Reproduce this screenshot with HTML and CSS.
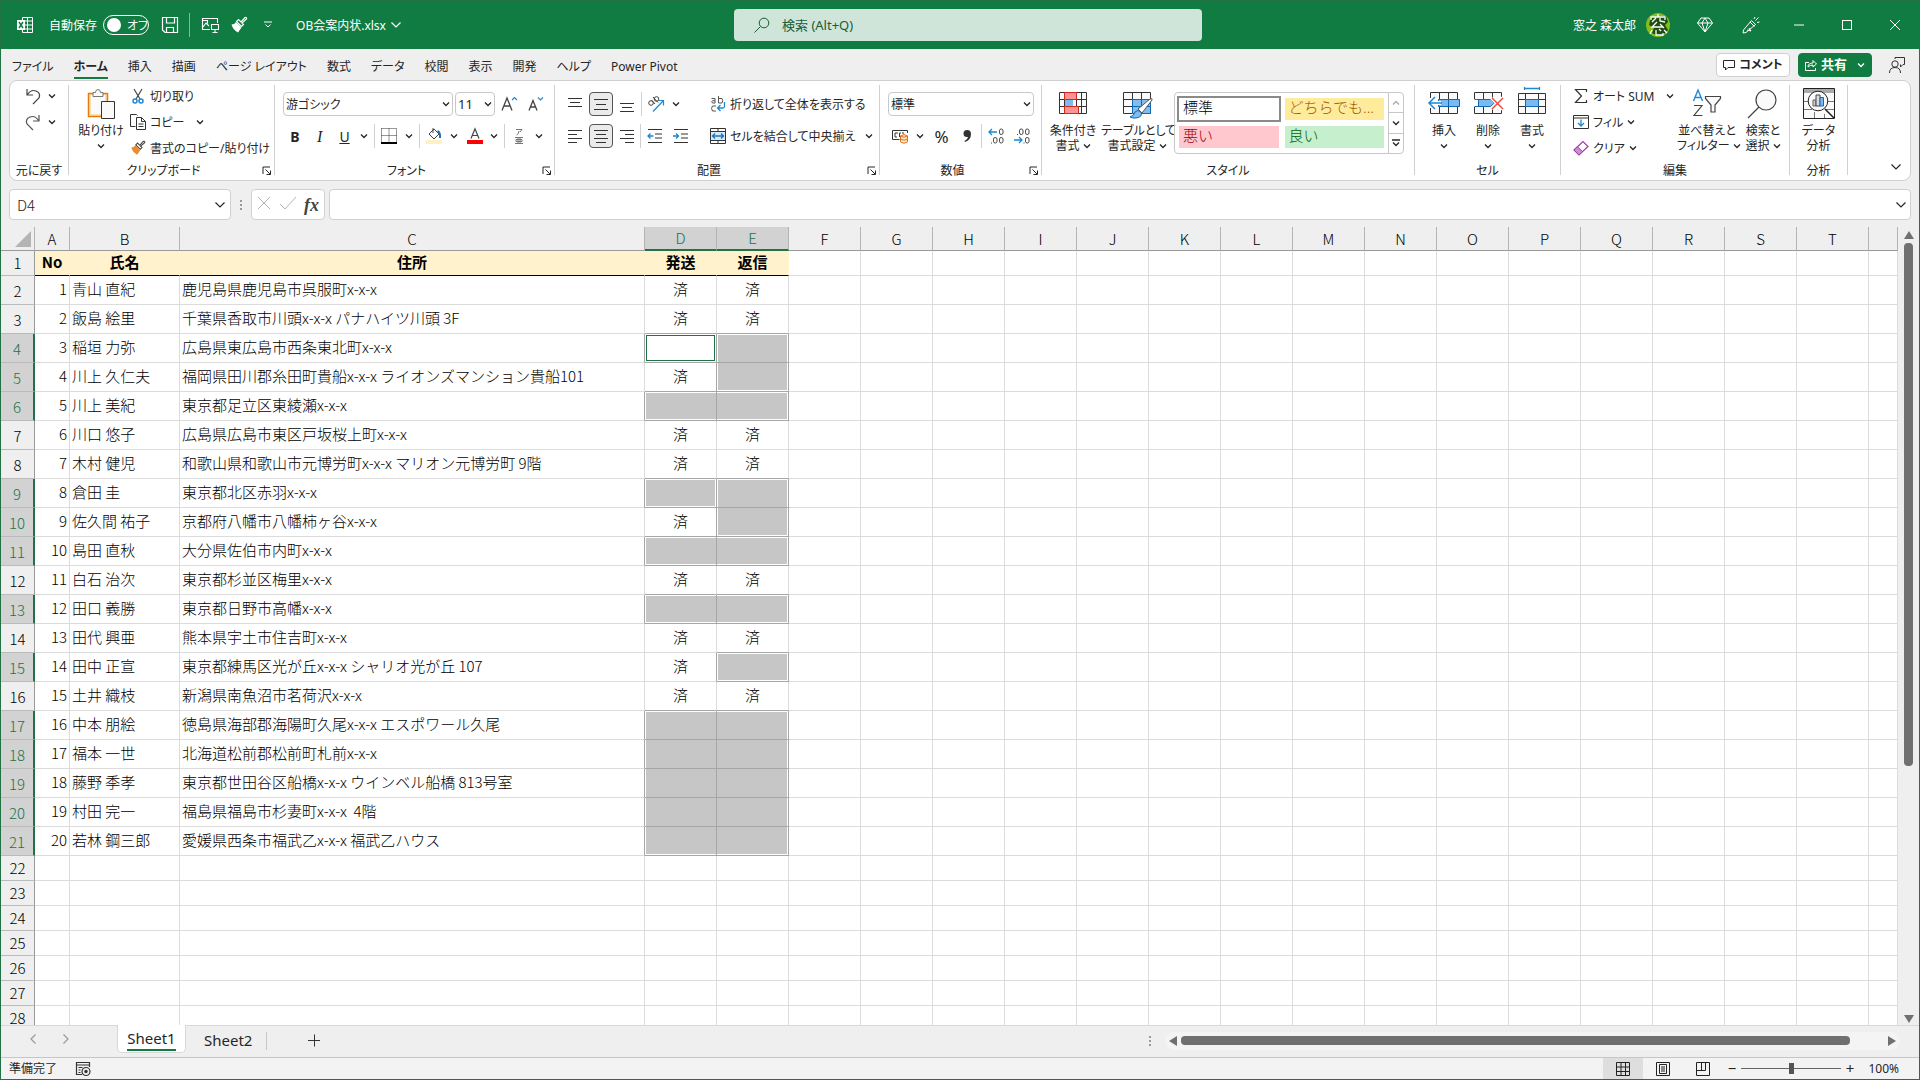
FILE: index.html
```
<!DOCTYPE html>
<html lang="ja">
  <head>
    <meta charset="utf-8">
    <title>OB会案内状.xlsx - Excel</title>
    <link rel="stylesheet" href="styles.css">
  </head>
  <body>
    <svg class="sprite" aria-hidden="true">
      <symbol id="caret" viewBox="0 0 8 8"><path d="M1 2.5 4 5.5 7 2.5" fill="none" stroke="currentColor" stroke-width="1.3"/></symbol>
      <symbol id="chevron" viewBox="0 0 12 12"><path d="M1.5 3.5 6 8 10.500 3.500" fill="none" stroke="currentColor" stroke-width="1.2"/></symbol>
      <symbol id="launcher" viewBox="0 0 10 10"><path d="M1 8V1h7M3.500 3.500 8 8M8.500 4.500v4h-4" fill="none" stroke="currentColor"/></symbol>
      <symbol id="brush" viewBox="0 0 18 18"><path d="M11 6 15 1.500q2-.5 1.500 1.500L12 7l1.500 1.500-2 2-5-5 2-2z" fill="none" stroke="currentColor" stroke-width="1.200"/><path class="bristle" d="m6 6 5.500 5.500L8 16.500Q3 14 1.500 8.500 4.500 8.500 6 6z"/></symbol>
    </svg>

    <header class="titlebar">
      <div class="title-left">
        <svg class="i16" viewBox="0 0 16 16"><path d="M5.500 3.500v-3h10v15h-10v-3M5.500 4h10M5.500 8h10M5.500 12h10M10.500.5v15" fill="none" stroke="#fff"/><path d="M0 3h8v10H0z" fill="#fff"/><path d="m2 5 4 6M6 5l-4 6" stroke="#107c41" stroke-width="1.500"/></svg>
        <label class="autosave">自動保存
          <span class="toggle"><input type="checkbox" role="switch"><span>オフ</span></span>
        </label>
        <button class="title-btn save" aria-label="上書き保存"><svg class="i16" viewBox="0 0 16 16"><path d="M.5.5h15v15H3l-2.500-2.500zM4.500.5v5.500h8V.5M4.500 15.500v-5h7v5" fill="none" stroke="#fff" stroke-width="1.200"/></svg></button>
        <span class="title-sep"></span>
        <button class="title-btn" aria-label="スクリーンショット"><svg class="i18" viewBox="0 0 18 18"><path d="M9 13.500H1.500v-11h15V7M1.500 4.500h5v3M2 11l3-4 3 3M10.500 8.500h7v5h-7zM14 13.500v3M11.500 16.500h5" fill="none" stroke="#fff" stroke-width="1.100"/></svg></button>
        <button class="title-btn white-brush" aria-label="書式のコピー"><svg class="i18"><use href="#brush"/></svg></button>
        <button class="title-btn" aria-label="クイック アクセス"><svg width="8" height="8" viewBox="0 0 8 8"><path d="M0 1h8M1.500 3.500 4 6l2.500-2.500" fill="none" stroke="#fff"/></svg></button>
        <button class="file-name">OB会案内状.xlsx <svg class="i12"><use href="#chevron"/></svg></button>
      </div>
      <label class="search">
        <svg class="i16" viewBox="0 0 16 16"><path d="M.5 15.500 6.500 9.500" stroke="#185c37"/><circle cx="10" cy="6" r="4.800" fill="none" stroke="#185c37"/></svg>
        <input type="search" placeholder="検索 (Alt+Q)" aria-label="検索">
      </label>
      <div class="title-right">
        <span class="user">窓之 森太郎</span>
        <svg class="avatar" viewBox="0 0 24 24"><circle cx="12" cy="12" r="12" fill="#86bc1c"/><path d="M5 4 20 3l2 6-3 3 3 5-4 4-6 2-6-3 2-5-5-3z" fill="#1e4d12"/><path d="M12 1v3M5 7V4h14v3M10 5 6 9M14 5v3l5 1M11 9l-5 5h11M14 11l4 4M6 17l-2 4M10 17v5h7v-2M13 16l2 2M18 17l3 3" fill="none" stroke="#fff" stroke-width="1.300"/></svg>
        <button class="win-btn" aria-label="Premium"><svg class="i16" viewBox="0 0 16 16"><path d="M4 1h8l3.500 5L8 15 .5 6zM.5 6h15M5 6l3 9 3-9-3-5z" fill="none" stroke="#fff"/></svg></button>
        <button class="win-btn" aria-label="新機能"><svg class="i18" viewBox="0 0 18 18"><path d="M9.500 4.500 1.500 14l-.5 3 3-.5 9.500-8zM5 14l4 1-2-3M12 3l1-2M13.500 4.500l3-3M15 6.500l2.500-.5M8 6l4.500 4.500" fill="none" stroke="#fff"/></svg></button>
        <button class="win-btn" aria-label="最小化"><svg class="i12" viewBox="0 0 12 12"><path d="M1 6h10" stroke="#fff"/></svg></button>
        <button class="win-btn" aria-label="最大化"><svg class="i12" viewBox="0 0 12 12"><rect x="1.500" y="1.500" width="9" height="9" fill="none" stroke="#fff"/></svg></button>
        <button class="win-btn" aria-label="閉じる"><svg class="i12" viewBox="0 0 12 12"><path d="m1 1 10 10M11 1 1 11" stroke="#fff"/></svg></button>
      </div>
    </header>

    <nav class="tabs">
      <a href="#">ファイル</a>
      <a href="#" class="active">ホーム</a>
      <a href="#">挿入</a>
      <a href="#">描画</a>
      <a href="#">ページ レイアウト</a>
      <a href="#">数式</a>
      <a href="#">データ</a>
      <a href="#">校閲</a>
      <a href="#">表示</a>
      <a href="#">開発</a>
      <a href="#">ヘルプ</a>
      <a href="#">Power Pivot</a>
      <button class="comment"><svg class="i12" viewBox="0 0 12 12"><path d="M.5 1.500h11v7H5l-2.500 2.500V8.500h-2z" fill="none" stroke="currentColor"/></svg>コメント</button>
      <button class="share"><svg class="i12" viewBox="0 0 12 12"><path d="M4 3.500H.5v8h10V9M3 8q0-4 5-4V1.500l3.500 3.500L8 8V6Q5 6 3 8z" fill="none" stroke="#fff"/></svg>共有 <svg class="i8"><use href="#caret"/></svg></button>
      <button class="people" aria-label="フィードバック"><svg class="i18" viewBox="0 0 18 18"><circle cx="7" cy="8" r="3.200" fill="none" stroke="#333"/><path d="M1.500 17q0-5.500 5.500-5.500T12.500 17M7 3V1.500h9.500v7H15l-2.500 2.500V8.500" fill="none" stroke="#333"/></svg></button>
    </nav>

    <section class="ribbon">
      <div class="group undo">
        <div class="content stack">
          <button aria-label="元に戻す"><svg class="i18" viewBox="0 0 18 18"><path d="M3 2v6h6M3 8q4-6 9-4t3 7l-6 6" fill="none" stroke="#444" stroke-width="1.200"/></svg><svg class="caret"><use href="#caret"/></svg></button>
          <button aria-label="やり直し"><svg class="i18" viewBox="0 0 18 18"><path d="M15 2v6H9M15 8q-4-6-9-4T3 11l6 6" fill="none" stroke="#555" stroke-width="1.200"/></svg><svg class="caret"><use href="#caret"/></svg></button>
        </div>
        <div class="label">元に戻す</div>
      </div>
      <div class="divider"></div>

      <div class="group clipboard">
        <div class="content">
          <button class="big"><svg class="i32" viewBox="0 0 32 32"><path d="M3.500 5.500h19v23h-19z" fill="#fbe3ae" stroke="#e07b16" stroke-width="1.500"/><path d="M6 7h14v19H6z" fill="#fafafa"/><path d="M8 8.500v-4h2.500q0-3 2.500-3t2.500 3H18v4z" fill="#fafafa" stroke="#777"/><path d="M16.500 13.500h13v17h-13z" fill="#fafafa" stroke="#333"/></svg>貼り付け<br><svg class="i8"><use href="#caret"/></svg></button>
          <div class="stack">
            <button><svg class="i16" viewBox="0 0 16 16"><path d="m4 1 6 10M12 1 6 11" stroke="#444" stroke-width="1.200"/><circle cx="5" cy="13" r="2" fill="none" stroke="#1e88d2" stroke-width="1.500"/><circle cx="11" cy="13" r="2" fill="none" stroke="#1e88d2" stroke-width="1.500"/></svg>切り取り</button>
            <button><svg class="i16" viewBox="0 0 16 16"><path d="M5.500 12.500h-5V.5h6l1 1M6.500 3.500h5l4 4v8h-9zM11.500 3.500v4h4M8.500 10h5M8.500 12.500h5" fill="none" stroke="#333"/></svg>コピー<svg class="caret far"><use href="#caret"/></svg></button>
            <button class="orange-brush"><svg class="i16"><use href="#brush"/></svg>書式のコピー/貼り付け</button>
          </div>
        </div>
        <div class="label">クリップボード</div>
        <svg class="launcher"><use href="#launcher"/></svg>
      </div>
      <div class="divider"></div>

      <div class="group font">
        <div class="content rows">
          <div class="row">
            <select class="font-name" aria-label="フォント"><option>游ゴシック</option></select>
            <select class="font-size" aria-label="フォント サイズ"><option>11</option></select>
            <button class="tool" aria-label="拡大"><svg class="i18" viewBox="0 0 18 18"><path d="M2 15.500 7 3l5 12.500M3.700 11h6.600" fill="none" stroke="#444" stroke-width="1.300"/><path d="m12 5 2.500-2.500L17 5" fill="none" stroke="#1e88d2" stroke-width="1.200"/></svg></button>
            <button class="tool" aria-label="縮小"><svg class="i18" viewBox="0 0 18 18"><path d="M3 15.500 7 5.500l4 10M4.500 12h5" fill="none" stroke="#444" stroke-width="1.300"/><path d="M12 2.500 14.500 5 17 2.500" fill="none" stroke="#1e88d2" stroke-width="1.200"/></svg></button>
          </div>
          <div class="row tight">
            <button class="tool"><b>B</b></button>
            <button class="tool"><i>I</i></button>
            <button class="tool"><u>U</u></button><button class="drop" aria-label="下線"><svg class="i8"><use href="#caret"/></svg></button>
            <span class="vline"></span>
            <button class="tool" aria-label="罫線"><svg class="i16" viewBox="0 0 16 16"><path d="M.5.5h15v14M.5.5v14M8 .5v14M.5 7.500h15" fill="none" stroke="#333" stroke-dasharray="1 1"/><path d="M0 15h16" stroke="#000" stroke-width="2"/></svg></button><button class="drop" aria-label="罫線の種類"><svg class="i8"><use href="#caret"/></svg></button>
            <span class="vline"></span>
            <button class="tool" aria-label="塗りつぶし"><svg class="i16" viewBox="0 0 16 16"><path d="m3 6 5-5 5 5-5 5zM7 0v5" fill="none" stroke="#444"/><path d="M11.500 3q3 1 2.500 7" fill="none" stroke="#1e72b8" stroke-width="2"/><path d="M0 12h16v4H0z" fill="#fff0c8"/></svg></button><button class="drop" aria-label="塗りつぶしの色"><svg class="i8"><use href="#caret"/></svg></button>
            <button class="tool" aria-label="フォントの色"><svg class="i16" viewBox="0 0 16 16"><path d="M4 10.500 8 .8l4 9.700M5.500 7.500h5" fill="none" stroke="#444" stroke-width="1.200"/><path d="M0 12h16v4H0z" fill="#f00"/></svg></button><button class="drop" aria-label="色の選択"><svg class="i8"><use href="#caret"/></svg></button>
            <span class="vline"></span>
            <button class="tool" aria-label="ふりがな"><svg class="i16" viewBox="0 0 16 16"><path d="M5 1.500h6L9 4M8 3q0 3-2.500 4M4 9.500h8M5 11.500h6v2H5zM4 15.500h8M7 9.500v6M9 9.500v6" fill="none" stroke="#777"/></svg></button><button class="drop" aria-label="ふりがなの設定"><svg class="i8"><use href="#caret"/></svg></button>
          </div>
        </div>
        <div class="label">フォント</div>
        <svg class="launcher"><use href="#launcher"/></svg>
      </div>
      <div class="divider"></div>

      <div class="group align">
        <div class="content">
          <div class="rows">
            <div class="row">
              <button class="tool" aria-label="上揃え"><svg class="i16" viewBox="0 0 16 16"><path d="M1 2.500h14M3 6.500h10M1 10.500h14" stroke="#333"/></svg></button>
              <button class="tool on" aria-label="上下中央揃え"><svg class="i16" viewBox="0 0 16 16"><path d="M1 3.500h14M3 8.500h10M1 13.500h14" stroke="#333"/></svg></button>
              <button class="tool" aria-label="下揃え"><svg class="i16" viewBox="0 0 16 16"><path d="M1 7.500h14M3 11.500h10M1 15.500h14" stroke="#333"/></svg></button>
              <span class="vline"></span>
              <button class="tool" aria-label="方向"><svg class="i18" viewBox="0 0 18 18"><g fill="none" stroke="#444"><circle cx="4" cy="8" r="2.300"/><path d="m4.500 5 3.500 4M6 2l5 5.500"/><circle cx="9.500" cy="4" r="2.300"/></g><path d="M6 16.500 16 6M11.500 5.500h5v5" fill="none" stroke="#1e88d2" stroke-width="1.200"/></svg></button><button class="drop" aria-label="方向の種類"><svg class="i8"><use href="#caret"/></svg></button>
            </div>
            <div class="row">
              <button class="tool" aria-label="左揃え"><svg class="i16" viewBox="0 0 16 16"><path d="M1 2.500h14M1 6.500h9M1 10.500h14M1 14.500h9" stroke="#333"/></svg></button>
              <button class="tool on" aria-label="中央揃え"><svg class="i16" viewBox="0 0 16 16"><path d="M1 2.500h14M3 6.500h10M1 10.500h14M3 14.500h10" stroke="#333"/></svg></button>
              <button class="tool" aria-label="右揃え"><svg class="i16" viewBox="0 0 16 16"><path d="M1 2.500h14M6 6.500h9M1 10.500h14M6 14.500h9" stroke="#333"/></svg></button>
              <span class="vline"></span>
              <button class="tool" aria-label="インデントを減らす"><svg class="i16" viewBox="0 0 16 16"><path d="M1 1.500h14M8 6h7M8 10h7M1 14.500h14" stroke="#333"/><path d="M6.500 8H1M3.500 5.500 1 8l2.500 2.500" fill="none" stroke="#1e88d2" stroke-width="1.300"/></svg></button>
              <button class="tool" aria-label="インデントを増やす"><svg class="i16" viewBox="0 0 16 16"><path d="M1 1.500h14M8 6h7M8 10h7M1 14.500h14" stroke="#333"/><path d="M0 8h5.500M3 5.500 5.500 8 3 10.500" fill="none" stroke="#1e88d2" stroke-width="1.300"/></svg></button>
            </div>
          </div>
          <span class="vline tall"></span>
          <div class="rows wraps">
            <button class="row"><svg class="i16" viewBox="0 0 16 16"><g fill="none" stroke="#555"><path d="M1.500 2.500h3.500V7H2.500q-1.500-1.200 0-2.300H5M8.500 0v7h3.500q1.500-2.200 0-4.500H8.500M6 10H2.500q-2 2.300 0 5H6"/></g><path d="M14.500 6v4.500q0 1.500-2 1.500H8M10.500 9 7.500 12l3 3" fill="none" stroke="#1e88d2" stroke-width="1.300"/></svg>折り返して全体を表示する</button>
            <button class="row"><svg class="i16" viewBox="0 0 16 16"><path d="M.5.5h15v15H.5zM8 .5v3M8 12.500v3M.5 3.500h15M.5 12.500h15" fill="none" stroke="#333"/><path d="M1 4h14v8H1z" fill="#d5eaf8"/><path d="M2.500 8h11M5 5.500 2.500 8 5 10.500M11 5.500 13.500 8 11 10.500" fill="none" stroke="#1675bd" stroke-width="1.300"/></svg>セルを結合して中央揃え<svg class="caret"><use href="#caret"/></svg></button>
          </div>
        </div>
        <div class="label">配置</div>
        <svg class="launcher"><use href="#launcher"/></svg>
      </div>
      <div class="divider"></div>

      <div class="group number">
        <div class="content rows">
          <div class="row">
            <select class="number-format" aria-label="表示形式"><option>標準</option></select>
          </div>
          <div class="row">
            <button class="tool" aria-label="通貨表示形式"><svg class="i16" viewBox="0 0 16 16"><path d="M7.500 11.500h-7v-9h15V5M6 5H3v4h2M9 5H7.500v4M12 5h-2" fill="none" stroke="#333"/><path d="M8.500 8v6q3.500 2.500 7 0V8q-3.500-3-7 0zq3.500 2.500 7 0M8.500 11q3.500 2.500 7 0" fill="#ffe9c7" stroke="#e0701a"/></svg></button><button class="drop" aria-label="通貨の種類"><svg class="i8"><use href="#caret"/></svg></button>
            <button class="tool percent">%</button>
            <button class="tool" aria-label="桁区切り"><svg class="i16" viewBox="0 0 16 16"><path d="M8 2q4 0 4 4 0 6-6 8l-.5-1Q9 11 9 9q-4.500.5-4.500-3.500Q4.500 2 8 2z" fill="#333"/></svg></button>
            <span class="vline"></span>
            <button class="tool" aria-label="小数点以下の表示桁数を増やす"><svg class="i16" viewBox="0 0 16 16"><path d="M9 4H1M4 1 1 4l3 3" fill="none" stroke="#1e88d2" stroke-width="1.300"/><g fill="none" stroke="#444"><rect x="11.500" y="1" width="3.500" height="5.500" rx="1.700"/><rect x="5.500" y="9.500" width="3.500" height="5.500" rx="1.700"/><rect x="11.500" y="9.500" width="3.500" height="5.500" rx="1.700"/><path d="M3 15h1"/></g></svg></button>
            <button class="tool" aria-label="小数点以下の表示桁数を減らす"><svg class="i16" viewBox="0 0 16 16"><path d="M0 12h8M5 9l3 3-3 3" fill="none" stroke="#1e88d2" stroke-width="1.300"/><g fill="none" stroke="#444"><rect x="5.500" y="1" width="3.500" height="5.500" rx="1.700"/><rect x="11.500" y="1" width="3.500" height="5.500" rx="1.700"/><rect x="11.500" y="9.500" width="3.500" height="5.500" rx="1.700"/><path d="M3 6.500h1M9.500 15h1"/></g></svg></button>
          </div>
        </div>
        <div class="label">数値</div>
        <svg class="launcher"><use href="#launcher"/></svg>
      </div>
      <div class="divider"></div>

      <div class="group styles">
        <div class="content">
          <button class="big"><svg class="i32" viewBox="0 0 32 32"><path d="M2.500 4.500h27v21h-27zM2.500 11.500h27M2.500 18.500h27M7.500 4.500v21M24.500 4.500v21M19.500 4.500v21" fill="#fafafa" stroke="#333"/><path d="M7.500 4.500h12v7h-12zM7.500 18.500h14v7h-14z" fill="#ff9292" stroke="#d8261c"/><path d="M8 12h8v6H8z" fill="#7cb9ee"/></svg>条件付き<br>書式 <svg class="i8"><use href="#caret"/></svg></button>
          <button class="big"><svg class="i32" viewBox="0 0 32 32"><path d="M2.500 4.500h27v21h-27zM2.500 11.500h27M2.500 18.500h27M11.500 4.500v21M20.500 4.500v21" fill="#fafafa" stroke="#333"/><path d="M11.500 11.500h18v14h-18zM20.500 11.500v14M11.500 18.500h18" fill="#83bdee" stroke="#1169b3"/><path d="m17 21 12-10q3-1 2 1L21 25z" fill="#fff" stroke="#555"/><path d="M9 29q4-1 5-5 3-3 6 0 2 5-5 6-3 .5-6-1z" fill="#83bdee" stroke="#1169b3"/></svg>テーブルとして<br>書式設定 <svg class="i8"><use href="#caret"/></svg></button>
          <div class="gallery">
            <div class="swatches">
              <button class="normal">標準</button>
              <button class="neutral">どちらでも...</button>
              <button class="bad">悪い</button>
              <button class="good">良い</button>
            </div>
            <div class="gallery-nav">
              <button disabled aria-label="前へ"><svg class="i8 flip"><use href="#caret"/></svg></button>
              <button aria-label="次へ"><svg class="i8"><use href="#caret"/></svg></button>
              <button aria-label="その他"><svg class="i8" viewBox="0 0 8 8"><path d="M0 1h8M1 3.500l3 3 3-3" fill="none" stroke="currentColor" stroke-width="1.300"/></svg></button>
            </div>
          </div>
        </div>
        <div class="label">スタイル</div>
      </div>
      <div class="divider"></div>

      <div class="group cells">
        <div class="content">
          <button class="big"><svg class="i32" viewBox="0 0 32 32"><path d="M2.500 4.500h27v21h-27zM11.500 4.500v21M20.500 4.500v21" fill="#fafafa" stroke="#333"/><path d="M10.500 11.500h21v7h-21zM20.500 11.500v7" fill="#7cb9ee" stroke="#1169b3"/><path d="M0 10h6v10H0z" fill="#fff"/><path d="M13 15H1.500M7 9l-6 6 6 6" fill="none" stroke="#fff" stroke-width="4"/><path d="M14 15H1.500M7 9l-6 6 6 6" fill="none" stroke="#1e88d2" stroke-width="1.500"/></svg>挿入<br><svg class="i8"><use href="#caret"/></svg></button>
          <button class="big"><svg class="i32" viewBox="0 0 32 32"><path d="M2.500 4.500h27v21h-27zM11.500 4.500v21M20.500 4.500v21" fill="#fafafa" stroke="#333"/><path d="M0 11h32v8H0z" fill="#fff"/><path d="M2.500 11.500h5M2.500 18.500h5M6.500 11.500h12l4 3.500-4 3.500h-12z" fill="#7cb9ee" stroke="#1169b3"/><path d="m20 10 11 11M31 10 20 21" stroke="#fff" stroke-width="4"/><path d="m20 10 11 11M31 10 20 21" stroke="#f04a43" stroke-width="1.500"/></svg>削除<br><svg class="i8"><use href="#caret"/></svg></button>
          <button class="big"><svg class="i32" viewBox="0 0 32 32"><path d="M2.500 5.500h27v20h-27zM2.500 11.500h27M2.500 18.500h27M9.500 5.500v20M22.500 5.500v20" fill="#fafafa" stroke="#333"/><path d="M9.500 11.500h13v7h-13z" fill="#7cb9ee" stroke="#1169b3"/><path d="M8.500.5h15M8.500-1v3M23.500-1v3" stroke="#1e88d2" stroke-width="1.300"/></svg>書式<br><svg class="i8"><use href="#caret"/></svg></button>
        </div>
        <div class="label">セル</div>
      </div>
      <div class="divider"></div>

      <div class="group editing">
        <div class="content">
          <div class="stack">
            <button><svg class="i16" viewBox="0 0 16 16"><path d="M13.500 4V1.500h-11L8.500 8l-6 6.500h11V12" fill="none" stroke="#333" stroke-width="1.200"/></svg>オート SUM<svg class="caret far"><use href="#caret"/></svg></button>
            <button><svg class="i16" viewBox="0 0 16 16"><path d="M.5 1.500h15v13H.5zM.5 4h15" fill="none" stroke="#333"/><path d="M8 5.500V12M5 9l3 3 3-3" fill="none" stroke="#1e88d2" stroke-width="1.300"/></svg>フィル<svg class="caret"><use href="#caret"/></svg></button>
            <button><svg class="i16" viewBox="0 0 16 16"><path d="m1 10 9-8.500 5 5L6 15z" fill="#fff" stroke="#9a3fa5" stroke-width="1.200"/><path d="m1 10 3.500-3.300 5 5L6 15z" fill="#cf8ad8" stroke="#9a3fa5"/></svg>クリア<svg class="caret"><use href="#caret"/></svg></button>
          </div>
          <button class="big sort"><svg class="i32" viewBox="0 0 32 32"><path d="m2.500 13 4.500-11 4.500 11M4 9.500h6" fill="none" stroke="#1e88d2" stroke-width="1.400"/><path d="M3 17.500h8l-8 10h8.500" fill="none" stroke="#444" stroke-width="1.200"/><path d="M14.500 8.500h15v2L24 17v7h-4v-7l-5.500-6.500z" fill="#fafafa" stroke="#444" stroke-width="1.200"/></svg>並べ替えと<br>フィルター <svg class="i8"><use href="#caret"/></svg></button>
          <button class="big"><svg class="i32" viewBox="0 0 32 32"><circle cx="19" cy="12" r="10" fill="#fafafa" stroke="#444" stroke-width="1.200"/><path d="M12 19 1 30" stroke="#444" stroke-width="1.300"/></svg>検索と<br>選択 <svg class="i8"><use href="#caret"/></svg></button>
        </div>
        <div class="label">編集</div>
      </div>
      <div class="divider"></div>

      <div class="group analysis">
        <div class="content">
          <button class="big"><svg class="i32" viewBox="0 0 32 32"><path d="M.5.5h31v30H.5z" fill="#fafafa" stroke="#222"/><path d="M1 1h30v4H1z" fill="#aaa"/><path d="M1 13.500h6M1 21.500h8M24 13.500h7M23 21.500h8M11.500 24v6M21.500 26v4" stroke="#777"/><circle cx="15" cy="13" r="9.800" fill="#fafafa" stroke="#222"/><path d="m22 21 9 9" stroke="#222" stroke-width="1.500"/><path d="M10 12h3v6h-3z" fill="#ccc" stroke="#666"/><path d="M13 7h4v11h-4z" fill="#ddd" stroke="#444"/><path d="M17 9.500h3.500V18H17z" fill="#7cb9ee" stroke="#1169b3"/></svg>データ<br>分析</button>
        </div>
        <div class="label">分析</div>
      </div>
      <div class="divider"></div>
      <button class="collapse" aria-label="リボンを折りたたむ"><svg class="i12"><use href="#chevron"/></svg></button>
    </section>

    <section class="formula-bar">
      <label class="name-box"><input type="text" value="D4" aria-label="名前ボックス"><svg class="i12"><use href="#chevron"/></svg></label>
      <span class="dots"></span>
      <div class="formula-tools">
        <button aria-label="キャンセル"><svg class="i16" viewBox="0 0 16 16"><path d="m2 2 12 12M14 2 2 14" stroke="#b5b5b5"/></svg></button>
        <button aria-label="入力"><svg class="i16" viewBox="0 0 16 16"><path d="m0 9 5 5L16 2" fill="none" stroke="#b5b5b5"/></svg></button>
        <button class="fx">fx</button>
      </div>
      <label class="formula"><input type="text" aria-label="数式バー"><svg class="i12"><use href="#chevron"/></svg></label>
    </section>

    <main class="sheet">
      <div class="grid"><table id="grid"></table></div>
      <div class="scroll-y"><span class="up"></span><span class="thumb"></span><span class="down"></span></div>
    </main>

    <footer class="sheet-tabs">
      <button class="nav" aria-label="前のシート"><svg class="i12 left"><use href="#chevron"/></svg></button>
      <button class="nav" aria-label="次のシート"><svg class="i12 right"><use href="#chevron"/></svg></button>
      <button class="sheet-tab current"><span>Sheet1</span></button>
      <button class="sheet-tab">Sheet2</button>
      <button class="add" aria-label="新しいシート"><svg class="i12" viewBox="0 0 12 12"><path d="M0 5.500h12M6.500-.5v12" stroke="#333"/></svg></button>
      <span class="dots"></span>
      <div class="scroll-x"><span class="prev"></span><span class="thumb"></span><span class="next"></span></div>
    </footer>

    <footer class="status">
      <span>準備完了</span>
      <svg class="i16" viewBox="0 0 16 16"><path d="M7 13.500H1.500v-12h13V6M1.500 4h13M3.500 6.500h4M3.500 9h2M3.500 11.500h2" fill="none" stroke="#333" stroke-width="1.200"/><circle cx="11" cy="10.500" r="4" fill="#f3f3f3" stroke="#333" stroke-width="1.200"/><circle cx="11" cy="10.500" r="1.700" fill="#333"/></svg>
      <div class="views">
        <button class="on" aria-label="標準"><svg class="i14" viewBox="0 0 14 14"><path d="M.5.5h13v13H.5zM5 .5v13M9.500.5v13M.5 5h13M.5 9.500h13" fill="none" stroke="#222"/></svg></button>
        <button aria-label="ページ レイアウト"><svg class="i14" viewBox="0 0 14 14"><path d="M.5.5h13v13H.5zM3.500 2.500h7v9h-7zM5 5h4M5 7h4M5 9h4" fill="none" stroke="#222"/></svg></button>
        <button aria-label="改ページ プレビュー"><svg class="i14" viewBox="0 0 14 14"><path d="M.5.5h13v13H.5zM5.500.5v8M9.500.5v8h-9" fill="none" stroke="#222"/></svg></button>
      </div>
      <button class="zoom-btn" aria-label="縮小">−</button>
      <input class="zoom" type="range" min="0" max="200" value="100" aria-label="ズーム">
      <button class="zoom-btn" aria-label="拡大">+</button>
      <span class="percent-value">100%</span>
    </footer>
    <script src="script.js"></script>
  </body>
</html>
```
FILE: styles.css
```
* {
  box-sizing: border-box;
}

body {
  margin: 0;
  height: 100vh;
  display: flex;
  flex-direction: column;
  overflow: hidden;
  background: #efefef;
  border: 1px solid #217346;
  color: #262626;
  font-family: "Noto Sans", "Noto Sans CJK JP", sans-serif;
  font-feature-settings: "palt";
  font-size: 12px;
  line-height: 15px;
}

button, input, select {
  font: inherit;
  font-feature-settings: inherit;
  color: inherit;
  background: none;
  border: 0;
  padding: 0;
  margin: 0;
  outline: 0;
}

svg {
  flex: none;
  overflow: visible;
}

.sprite {
  position: absolute;
  width: 0;
  height: 0;
}

.i8, .caret { width: 8px; height: 8px; }
.i12 { width: 12px; height: 12px; }
.i14 { width: 14px; height: 14px; }
.i16 { width: 16px; height: 16px; }
.i18 { width: 18px; height: 18px; }
.i32 { width: 32px; height: 32px; }

/* title bar */
.titlebar {
  height: 48px;
  flex: none;
  display: grid;
  grid-template-columns: 733fr 468fr 717fr;
  align-items: center;
  background: #107c41;
  color: #fff;
}

.title-left, .title-right {
  display: flex;
  align-items: center;
  white-space: nowrap;
}

.title-left {
  padding-left: 16px;
}

.autosave {
  display: flex;
  align-items: center;
  gap: 6px;
  margin: 0 9px 0 16px;
}

.toggle {
  display: flex;
  align-items: center;
  gap: 6px;
  width: 46px;
  height: 20px;
  padding-left: 3px;
  border: 1px solid #fff;
  border-radius: 10px;
}

.toggle input {
  appearance: none;
  width: 14px;
  height: 14px;
  border-radius: 50%;
  background: #fff;
}

.title-btn {
  width: 29px;
  height: 28px;
  display: grid;
  place-items: center;
}

.title-btn.save {
  width: 24px;
}

.white-brush .i18 {
  fill: #fff;
}

.title-sep {
  width: 1px;
  height: 24px;
  margin: 0 5px 0 7px;
  background: #7fb99a;
}

.file-name {
  display: flex;
  align-items: center;
  gap: 4px;
  margin-left: 14px;
}

.search {
  height: 32px;
  display: flex;
  align-items: center;
  gap: 12px;
  padding-left: 20px;
  border-radius: 4px;
  background: #cfe5d9;
}

.search input {
  flex: 1;
  color: #185c37;
  font-size: 13px;
}

.search input::placeholder {
  color: #185c37;
}

.title-right {
  justify-content: flex-end;
}

.avatar {
  width: 24px;
  height: 24px;
  margin: 0 11px 0 10px;
}

.title-right .win-btn:nth-of-type(1) {
  margin-right: -2px;
}

.win-btn {
  width: 48px;
  height: 32px;
  display: grid;
  place-items: center;
}

/* tabs */
.tabs {
  height: 31px;
  flex: none;
  display: flex;
  align-items: center;
  gap: 20px;
  padding: 0 13px 0 11px;
}

.tabs a {
  padding: 8px 0 3px;
  border-bottom: 2px solid transparent;
  color: inherit;
  text-decoration: none;
  white-space: nowrap;
}

.tabs .active {
  border-color: #107c41;
  font-weight: bold;
}

.comment, .share {
  display: flex;
  align-items: center;
  justify-content: center;
  gap: 4px;
  width: 74px;
  height: 24px;
  border: 1px solid #d0d0d0;
  border-radius: 4px;
  background: #fff;
  font-weight: bold;
}

.comment {
  margin-left: auto;
}

.share {
  margin: 0 -4px 0 -12px;
  border-color: #107c41;
  background: #107c41;
  color: #fff;
  font-size: 13px;
}

.share .i8 {
  margin-left: 6px;
}

.people {
  height: 18px;
}

/* ribbon */
.ribbon {
  height: 101px;
  flex: none;
  display: flex;
  margin: 0 8px;
  border: 1px solid #d0d0d0;
  border-radius: 8px;
  background: #fff;
}

.divider {
  width: 1px;
  margin: 4px 0 5px;
  background: #d0d0d0;
}

.group {
  position: relative;
  display: flex;
  flex-direction: column;
  white-space: nowrap;
}

.undo { width: 58px; }
.clipboard { width: 205px; }
.font { width: 279px; }
.align { width: 324px; }
.number { width: 161px; }
.styles { width: 372px; }
.cells { width: 145px; }
.editing { width: 228px; }
.analysis { width: 57px; }

.content {
  flex: 1;
  display: flex;
  padding: 4px 7px 0;
}

.label {
  height: 16px;
  margin-bottom: 1px;
  text-align: center;
}

.clipboard .label, .font .label, .align .label, .number .label {
  padding-right: 16px;
}

.launcher {
  position: absolute;
  right: 2px;
  bottom: 4px;
  width: 10px;
  height: 10px;
}

.stack, .content.stack {
  display: flex;
  flex-direction: column;
  gap: 4px;
}

.stack button {
  height: 22px;
  display: flex;
  align-items: center;
  gap: 4px;
}

.undo .stack {
  padding-left: 14px;
}

.undo .stack button {
  gap: 6px;
}

.caret.far {
  margin-left: 8px;
}

.orange-brush .i16 {
  color: #444;
  fill: #ee8a2a;
}

.big {
  display: block;
  flex: none;
  align-self: flex-start;
  padding-top: 3px;
  text-align: center;
}

.big .i32 {
  display: block;
  margin: 0 auto 3px;
}

.clipboard .big {
  width: 50px;
  margin-right: 4px;
}

.rows {
  display: flex;
  flex-direction: column;
  gap: 8px;
}

.font .content, .number .content, .align .content {
  padding-top: 11px;
}

.font .content, .align .content, .number .content {
  padding-left: 8px;
}

.row {
  height: 24px;
  display: flex;
  align-items: center;
  gap: 2px;
}

.row.tight {
  gap: 1px;
}

.tool {
  width: 24px;
  height: 24px;
  display: grid;
  place-items: center;
  font-size: 14px;
}

.tool.on {
  border: 1px solid #555;
  border-radius: 4px;
  background: #ebebeb;
}

.tool i {
  font-family: "Liberation Serif", serif;
  font-size: 16px;
}

.tool.percent {
  font-size: 17px;
}

/* the drop arrow belongs to the tool on its left */
.drop {
  width: 16px;
  height: 24px;
  margin-left: -2px;
  display: grid;
  place-items: center;
}

.tight .drop {
  margin-left: -1px;
}

.vline {
  width: 1px;
  height: 24px;
  background: #d0d0d0;
}

.tight .vline {
  margin: 0 1px;
}

.vline.tall {
  height: 62px;
  margin-left: 6px;
}

select {
  appearance: none;
  height: 24px;
  padding: 0 16px 0 2px;
  border: 1px solid #c8c8c8;
  border-radius: 4px;
  background: #fff url("data:image/svg+xml,%3Csvg xmlns='http://www.w3.org/2000/svg' width='8' height='8'%3E%3Cpath d='M1 2.500 4 5.500 7 2.500' fill='none' stroke='%23262626' stroke-width='1.300'/%3E%3C/svg%3E") no-repeat right 2px center;
}

.font-name { width: 170px; }
.font-size { width: 40px; font-size: 13px; }
.number-format { width: 146px; }

.align .rows {
  width: 130px;
}

.align .wraps {
  width: auto;
  padding-left: 11px;
}

.wraps .row {
  gap: 4px;
}

.wraps .caret {
  margin-left: 6px;
}

.styles .content {
  padding-left: 3px;
}

.styles .big:first-child {
  width: 56px;
}

.styles .big {
  width: 72px;
}

.gallery {
  display: flex;
  width: 230px;
  height: 62px;
  margin: 7px 0 0 1px;
  border: 1px solid #c8c8c8;
  border-radius: 4px;
}

.swatches {
  flex: 1;
  display: grid;
  grid-template-columns: 1fr 1fr;
  gap: 6px;
  padding: 5px 4px;
  font-size: 15px;
  font-weight: 300;
  font-feature-settings: normal;
}

.swatches button {
  height: 22px;
  padding: 0 0 4px 4px;
  text-align: left;
  line-height: 18px;
}

.normal {
  color: #000;
  outline: 2px solid #8a8a86;
  box-shadow: 0 0 0 1px #d0d0cc;
}

.neutral { background: #ffeb9c; color: #9c5700; }
.bad { background: #ffc7ce; color: #9c0006; }
.good { background: #c6efce; color: #006100; }

.gallery-nav {
  width: 15px;
  display: flex;
  flex-direction: column;
  border-left: 1px solid #c8c8c8;
}

.gallery-nav button {
  flex: 1;
  display: grid;
  place-items: center;
}

.gallery-nav button + button {
  border-top: 1px solid #c8c8c8;
}

.gallery-nav button:disabled {
  color: #aaa;
}

.flip { transform: rotate(180deg); }
.left { transform: rotate(90deg); }
.right { transform: rotate(-90deg); }

.cells .big {
  width: 44px;
}

.editing .content {
  padding-left: 12px;
}

.editing .stack {
  width: 100px;
}

.editing .big {
  width: 48px;
}

.editing .sort {
  width: 60px;
  margin: 0 2px 0 4px;
}

.analysis .big {
  width: 43px;
}

.collapse {
  align-self: flex-end;
  height: 24px;
  margin: 0 8px 0 auto;
}

/* formula bar */
.formula-bar {
  height: 46px;
  flex: none;
  display: flex;
  padding: 8px 8px 7px;
}

.name-box, .formula, .formula-tools {
  display: flex;
  align-items: center;
  border: 1px solid #d0d0d0;
  border-radius: 4px;
  background: #fff;
}

.name-box {
  width: 222px;
  padding: 0 4px 0 7px;
  font-size: 15px;
  font-weight: 300;
}

.name-box input, .formula input {
  flex: 1;
  min-width: 0;
  font-family: "Noto Sans CJK JP", sans-serif;
}

.dots {
  width: 2px;
  height: 10px;
  margin: auto 9px;
  background: repeating-linear-gradient(#999 0 2px, transparent 2px 4px);
}

.formula-tools {
  gap: 8px;
  width: 74px;
  padding-left: 4px;
}

.formula-tools button {
  height: 20px;
}

.formula-tools .fx {
  font: italic bold 18px/20px "Liberation Serif", serif;
  color: #444;
}

.formula {
  flex: 1;
  margin-left: 4px;
  padding: 0 3px;
}

/* worksheet */
.sheet {
  flex: 1;
  min-height: 0;
  display: flex;
}

.grid {
  flex: 1;
  overflow: hidden;
}

#grid {
  width: 100%;
  table-layout: fixed;
  border-spacing: 0;
  background: #fff;
  color: #000;
  font-family: "Noto Sans CJK JP", sans-serif;
  font-feature-settings: normal;
  font-size: 15px;
  font-weight: 300;
  line-height: 20px;
}

#grid td, #grid th {
  padding: 0 2px 2px;
  border-right: 1px solid #dcdcdc;
  border-bottom: 1px solid #dcdcdc;
  white-space: pre;
}

#grid tr { height: 25px; }
#grid .filled { height: 29px; }
#grid thead tr { height: 24px; }

#grid thead th {
  padding: 0;
  border-right-color: #b4b4b4;
  border-bottom-color: #999;
  background: #efefef;
  font-weight: 300;
}

#grid thead .picked {
  border-bottom: 2px solid #217346;
  background: #d2d2d2;
  color: #217346;
}

#grid tbody th {
  padding: 0 0 1px;
  border-right-color: #999;
  border-bottom-color: #bbb;
  background: #efefef;
  font-weight: 300;
}

#grid .filled th {
  padding: 1px 0 0;
}

#grid tbody th.picked {
  border-right: 2px solid #217346;
  background: #d2d2d2;
  color: #217346;
}

.corner {
  display: block;
  margin: 0 3px 0 auto;
}

#grid .head {
  border-right-color: #fff2cc;
  border-bottom-color: #000;
  background: #fff2cc;
  font-weight: bold;
  text-align: center;
}

.no { text-align: right; }
.mark { text-align: center; }

#grid .sel { background: #c6c6c6; }
#grid .line-right { border-right-color: #a6a6a6; }
#grid .line-bottom { border-bottom-color: #a6a6a6; }

/* white inner edge of a selected range */
.sel {
  box-shadow: inset 0 var(--t, 0) #fff, inset 0 var(--b, 0) #fff, inset var(--l, 0) 0 #fff, inset var(--r, 0) 0 #fff;
}

.edge-t { --t: 1px; }
.edge-b { --b: -1px; }
.edge-l { --l: 1px; }
.edge-r { --r: -1px; }

#grid .cursor {
  background: #fff;
  box-shadow: inset 0 0 0 1px #fff, inset 0 0 0 2px #217346;
}

.scroll-y {
  width: 21px;
  display: flex;
  flex-direction: column;
  align-items: center;
  padding: 4px 0 2px;
}

.thumb {
  border-radius: 4px;
  background: #707070;
}

.scroll-y .thumb {
  width: 9px;
  flex: 0 0 66%;
  margin-top: 4px;
}

.up, .down {
  border: 5px solid transparent;
}

.up {
  border-top: 0;
  border-bottom: 8px solid #707070;
}

.down {
  margin-top: auto;
  border-bottom: 0;
  border-top: 8px solid #707070;
}

/* sheet tabs */
.sheet-tabs {
  height: 32px;
  flex: none;
  display: flex;
  align-items: center;
  padding: 0 19px 2px 15px;
  border-top: 1px solid #d8d8d8;
}

.nav {
  width: 33px;
  color: #999;
}

.sheet-tab {
  height: 18px;
  padding: 0 14px;
  border-right: 1px solid #c8c8c8;
  font-size: 15px;
}

.sheet-tab.current {
  align-self: flex-start;
  width: 69px;
  height: 28px;
  margin: -1px 4px 0 35px;
  padding: 0;
  border: 1px solid #d8d8d8;
  border-top: 0;
  border-radius: 0 0 5px 5px;
  background: #fff;
}

.sheet-tab.current span {
  padding-bottom: 1px;
  border-bottom: 2px solid #107c41;
}

.add {
  margin-left: 41px;
  height: 12px;
}

.sheet-tabs .dots {
  margin: auto 14px auto auto;
}

.scroll-x {
  width: 39%;
  height: 18px;
  display: flex;
  align-items: center;
  padding: 0 4px;
  border-radius: 9px;
  background: #f4f4f4;
}

.scroll-x .thumb {
  height: 9px;
  flex: 0 0 92%;
  margin-left: 4px;
}

.prev, .next {
  border: 5px solid transparent;
}

.prev {
  border-left: 0;
  border-right: 8px solid #707070;
}

.next {
  margin-left: auto;
  border-right: 0;
  border-left: 8px solid #707070;
}

/* status bar */
.status {
  height: 22px;
  flex: none;
  display: flex;
  align-items: center;
  padding: 0 20px 0 8px;
  border-top: 1px solid #c6c6c6;
  background: #f3f3f3;
}

.status > .i16 {
  margin-left: 18px;
}

.views {
  display: flex;
  align-self: stretch;
  margin-left: auto;
}

.views button {
  width: 40px;
  display: grid;
  place-items: center;
}

.views .on {
  background: #dedede;
}

.zoom-btn {
  width: 18px;
  font-size: 15px;
}

.zoom {
  appearance: none;
  width: 100px;
  height: 11px;
  background: linear-gradient(#666, #666) center / 100% 1px no-repeat;
}

.zoom::-webkit-slider-thumb {
  appearance: none;
  width: 5px;
  height: 11px;
  background: #555;
}

.percent-value {
  width: 40px;
  text-align: right;
}
```
FILE: script.js
```
const people = [
  ['青山 直紀', '鹿児島県鹿児島市呉服町x-x-x', '済', '済'],
  ['飯島 絵里', '千葉県香取市川頭x-x-x パナハイツ川頭 3F', '済', '済'],
  ['稲垣 力弥', '広島県東広島市西条東北町x-x-x', '', ''],
  ['川上 久仁夫', '福岡県田川郡糸田町貴船x-x-x ライオンズマンション貴船101', '済', ''],
  ['川上 美紀', '東京都足立区東綾瀬x-x-x', '', ''],
  ['川口 悠子', '広島県広島市東区戸坂桜上町x-x-x', '済', '済'],
  ['木村 健児', '和歌山県和歌山市元博労町x-x-x マリオン元博労町 9階', '済', '済'],
  ['倉田 圭', '東京都北区赤羽x-x-x', '', ''],
  ['佐久間 祐子', '京都府八幡市八幡柿ヶ谷x-x-x', '済', ''],
  ['島田 直秋', '大分県佐伯市内町x-x-x', '', ''],
  ['白石 治次', '東京都杉並区梅里x-x-x', '済', '済'],
  ['田口 義勝', '東京都日野市高幡x-x-x', '', ''],
  ['田代 興亜', '熊本県宇土市住吉町x-x-x', '済', '済'],
  ['田中 正宣', '東京都練馬区光が丘x-x-x シャリオ光が丘 107', '済', ''],
  ['土井 織枝', '新潟県南魚沼市茗荷沢x-x-x', '済', '済'],
  ['中本 朋絵', '徳島県海部郡海陽町久尾x-x-x エスポワール久尾', '', ''],
  ['福本 一世', '北海道松前郡松前町札前x-x-x', '', ''],
  ['藤野 季孝', '東京都世田谷区船橋x-x-x ウインベル船橋 813号室', '', ''],
  ['村田 完一', '福島県福島市杉妻町x-x-x  4階', '', ''],
  ['若林 鋼三郎', '愛媛県西条市福武乙x-x-x 福武乙ハウス', '', '']
];
const letters = 'ABCDEFGHIJKLMNOPQRST'.split('').concat('');
const widths = [34, 35, 110, 465];
const lastRow = 28;

// selected ranges: [top, left, bottom, right], column A is 0
const ranges = [
  [4, 3, 4, 3], [4, 4, 5, 4], [6, 3, 6, 4], [9, 3, 9, 3], [9, 4, 10, 4],
  [11, 3, 11, 4], [13, 3, 13, 4], [15, 4, 15, 4], [17, 3, 21, 4]
];

function rangeAt(row, col) {
  return ranges.findIndex(r => row >= r[0] && row <= r[2] && col >= r[1] && col <= r[3]);
}

function cellText(row, col) {
  if (row === 1) return ['No', '氏名', '住所', '発送', '返信'][col] || '';
  const person = people[row - 2];
  if (!person) return '';
  return col === 0 ? row - 1 : person[col - 1] || '';
}

function cellClass(row, col) {
  const names = [];
  const own = rangeAt(row, col);
  if (row === 1 && col < 5) names.push('head');
  else if (col === 0) names.push('no');
  else if (col === 3 || col === 4) names.push('mark');
  if (own >= 0) {
    names.push('sel');
    if (rangeAt(row - 1, col) !== own) names.push('edge-t');
    if (rangeAt(row + 1, col) !== own) names.push('edge-b');
    if (rangeAt(row, col - 1) !== own) names.push('edge-l');
    if (rangeAt(row, col + 1) !== own) names.push('edge-r');
  }
  if (own >= 0 || rangeAt(row, col + 1) >= 0) names.push('line-right');
  if (own >= 0 || rangeAt(row + 1, col) >= 0) names.push('line-bottom');
  if (row === 4 && col === 3) names.push('cursor');
  return names.join(' ');
}

let html = '<colgroup>';
for (let i = 0; i <= letters.length; i++) {
  html += i === letters.length ? '<col>' : `<col style="width: ${widths[i] || 72}px">`;
}
html += '</colgroup><thead><tr><th><svg class="corner" width="16" height="16"><path d="M16 0v16H0z" fill="#b4b4b4"/></svg></th>';
letters.forEach((letter, col) => {
  html += `<th class="${col === 3 || col === 4 ? 'picked' : ''}">${letter}</th>`;
});
html += '</tr></thead><tbody>';
for (let row = 1; row <= lastRow; row++) {
  const picked = ranges.some(r => row >= r[0] && row <= r[2]);
  html += `<tr class="${row > 1 && row < 22 ? 'filled' : ''}"><th class="${picked ? 'picked' : ''}">${row}</th>`;
  letters.forEach((letter, col) => {
    html += `<td class="${cellClass(row, col)}">${cellText(row, col)}</td>`;
  });
  html += '</tr>';
}
document.getElementById('grid').innerHTML = html + '</tbody>';
```
